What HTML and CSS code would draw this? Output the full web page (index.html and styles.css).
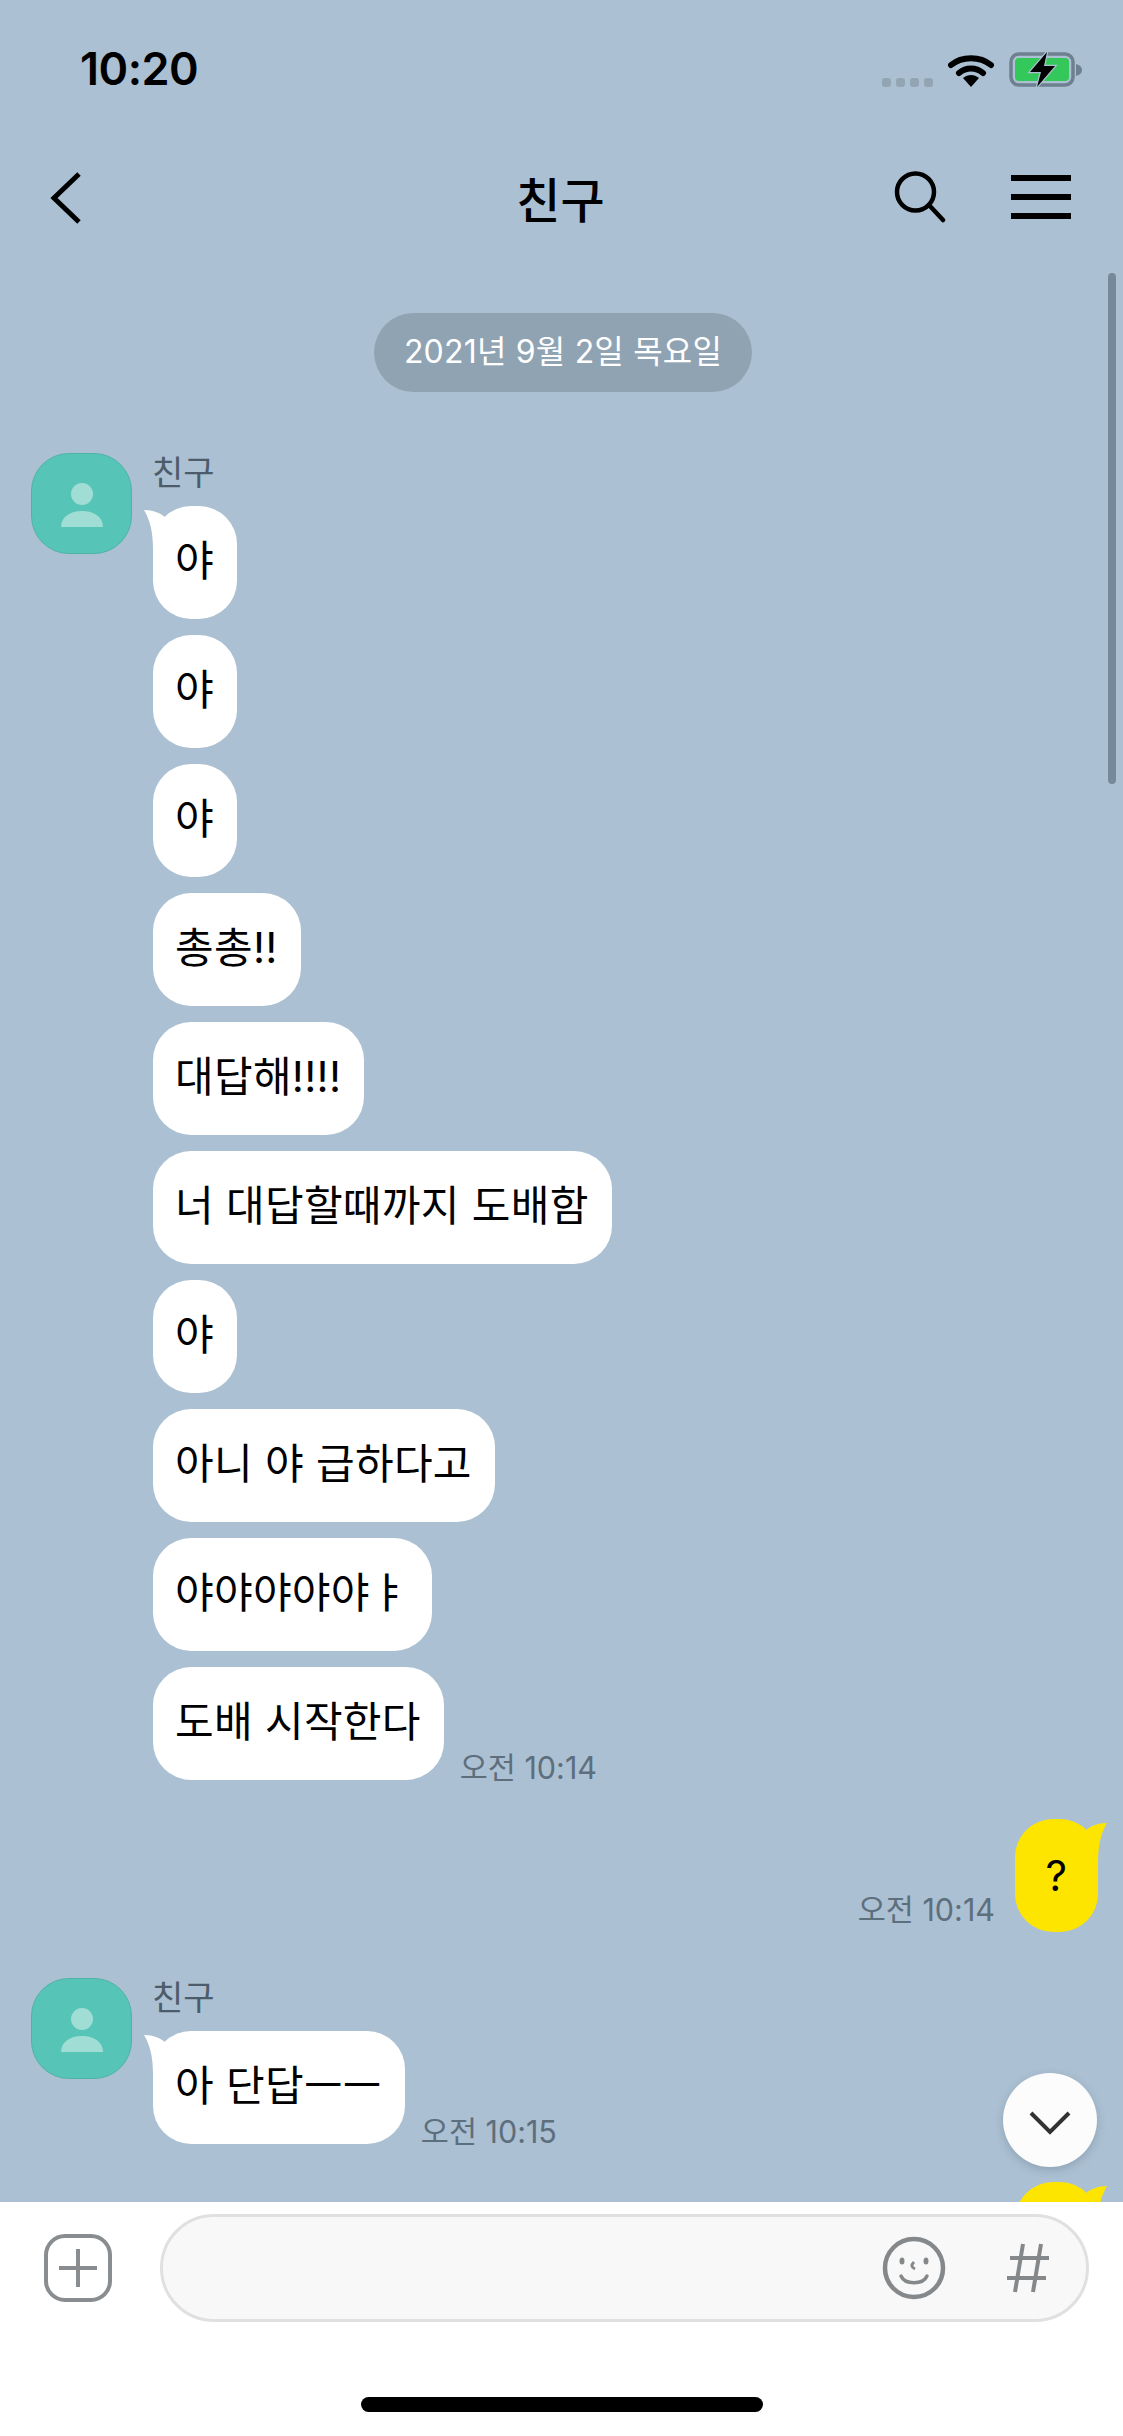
FILE: index.html
```html
<!DOCTYPE html>
<html lang="ko">

<head>
    <meta charset="UTF-8">
    <meta name="viewport" content="width=device-width, initial-scale=1.0">
    <title>친구</title>
    <link rel="stylesheet" href="styles.css">
</head>

<body>
    <div class="screen">
        <div class="status">
            <span class="clock">10:20</span>
            <div class="status-icons">
                <div class="signal"><i></i><i></i><i></i><i></i></div>
                <svg class="wifi" width="46" height="33" viewBox="0 0 46 33">
                    <path d="M3 11 C14 2 32 2 43 11" fill="none" stroke="#000" stroke-width="6" stroke-linecap="round"/>
                    <path d="M11 19 C18 13 28 13 35 19" fill="none" stroke="#000" stroke-width="6" stroke-linecap="round"/>
                    <path d="M15 24 C20 20 26 20 31 24 L23 33 Z" fill="#000"/>
                </svg>
                <svg class="battery" width="73" height="36" viewBox="0 0 73 36">
                    <rect x="2" y="2" width="62" height="31" rx="8" fill="none" stroke="#6f8090" stroke-width="3.5"/>
                    <rect x="6" y="6" width="54" height="23" rx="4" fill="#34c759"/>
                    <path d="M67 12 C71 13 73 15 73 18 C73 21 71 23 67 24 Z" fill="#6f8090"/>
                    <path d="M38 0 L21 20 L32 20 L28 35 L46 14 L35 14 Z" fill="#000" stroke="#abc0d2" stroke-width="2.500"/>
                    <path d="M38 0 L21 20 L32 20 L28 35 L46 14 L35 14 Z" fill="#000"/>
                </svg>
            </div>
        </div>

        <div class="nav">
            <svg class="back" width="32" height="54" viewBox="0 0 32 54">
                <path d="M29 3 L4 27 L29 51" fill="none" stroke="#000" stroke-width="5"/>
            </svg>
            <h1 class="title">친구</h1>
            <div class="nav-actions">
                <svg width="52" height="52" viewBox="0 0 52 52">
                    <circle cx="21.500" cy="21" r="18.500" fill="none" stroke="#000" stroke-width="4.500"/>
                    <path d="M35 34 L49 49" fill="none" stroke="#000" stroke-width="4.500" stroke-linecap="round"/>
                </svg>
                <div class="menu"><i></i><i></i><i></i></div>
            </div>
        </div>

        <div class="chat">
            <div class="date-row"><span class="date">2021년 9월 2일 목요일</span></div>

            <div class="group">
                <div class="avatar">
                    <svg width="44" height="44" viewBox="0 0 44 44">
                        <circle cx="22" cy="11" r="11" fill="#a0ddd5"/>
                        <path d="M1 44 C1 34 10 28 22 28 C34 28 43 34 43 44 Z" fill="#a0ddd5"/>
                    </svg>
                </div>
                <div class="stack">
                    <div class="name">친구</div>
                    <div class="line">
                        <div class="bubble">
                            <svg class="tail" width="24" height="40" viewBox="0 0 24 40">
                                <path d="M0 0 C9 0 17 3 22 8 L24 40 L9 40 C9 22 6 10 0 0 Z" fill="#fff"/>
                            </svg>
                            야
                        </div>
                    </div>
                    <div class="line"><div class="bubble">야</div></div>
                    <div class="line"><div class="bubble">야</div></div>
                    <div class="line"><div class="bubble">총총!!</div></div>
                    <div class="line"><div class="bubble">대답해!!!!</div></div>
                    <div class="line"><div class="bubble">너 대답할때까지 도배함</div></div>
                    <div class="line"><div class="bubble">야</div></div>
                    <div class="line"><div class="bubble">아니 야 급하다고</div></div>
                    <div class="line"><div class="bubble">야야야야야ㅑ</div></div>
                    <div class="line">
                        <div class="bubble">도배 시작한다</div>
                        <span class="time">오전 10:14</span>
                    </div>
                </div>
            </div>

            <div class="mine">
                <span class="time">오전 10:14</span>
                <div class="bubble yellow">
                    <svg class="tail-right" width="24" height="40" viewBox="0 0 24 40">
                        <path d="M24 0 C15 0 7 3 2 8 L0 40 L15 40 C15 22 18 10 24 0 Z" fill="#fee500"/>
                    </svg>
                    ?
                </div>
            </div>

            <div class="group second">
                <div class="avatar">
                    <svg width="44" height="44" viewBox="0 0 44 44">
                        <circle cx="22" cy="11" r="11" fill="#a0ddd5"/>
                        <path d="M1 44 C1 34 10 28 22 28 C34 28 43 34 43 44 Z" fill="#a0ddd5"/>
                    </svg>
                </div>
                <div class="stack">
                    <div class="name">친구</div>
                    <div class="line">
                        <div class="bubble">
                            <svg class="tail" width="24" height="40" viewBox="0 0 24 40">
                                <path d="M0 0 C9 0 17 3 22 8 L24 40 L9 40 C9 22 6 10 0 0 Z" fill="#fff"/>
                            </svg>
                            아 단답ㅡㅡ
                        </div>
                        <span class="time">오전 10:15</span>
                    </div>
                </div>
            </div>

            <div class="mine last">
                <div class="bubble yellow">
                    <svg class="tail-right" width="24" height="40" viewBox="0 0 24 40">
                        <path d="M24 0 C15 0 7 3 2 8 L0 40 L15 40 C15 22 18 10 24 0 Z" fill="#fee500"/>
                    </svg>
                </div>
            </div>

            <div class="scrollbar"></div>
            <div class="to-bottom">
                <svg width="44" height="26" viewBox="0 0 44 26">
                    <path d="M3 3 L22 22 L41 3" fill="none" stroke="#333" stroke-width="4"/>
                </svg>
            </div>
        </div>

        <div class="composer">
            <div class="composer-row">
                <svg class="plus" width="68" height="68" viewBox="0 0 68 68">
                    <rect x="2" y="2" width="64" height="64" rx="19" fill="none" stroke="#8a8d8f" stroke-width="4"/>
                    <path d="M15 34 H53 M34 15 V53" fill="none" stroke="#8a8d8f" stroke-width="4"/>
                </svg>
                <div class="field">
                    <svg width="64" height="64" viewBox="0 0 64 64">
                        <circle cx="32" cy="32" r="29" fill="none" stroke="#85888a" stroke-width="4.500"/>
                        <ellipse cx="20" cy="25" rx="2.500" ry="3.500" fill="#85888a"/>
                        <ellipse cx="44" cy="25" rx="2.500" ry="3.500" fill="#85888a"/>
                        <path d="M32 26 C29 29 29 31 33 33" fill="none" stroke="#85888a" stroke-width="3"/>
                        <path d="M19 40 C23 49 41 49 45 40" fill="none" stroke="#85888a" stroke-width="3.500" stroke-linecap="round"/>
                    </svg>
                    <svg class="hash" width="44" height="50" viewBox="0 0 44 50">
                        <path d="M17 1 L9 49 M35 1 L27 49 M4 15 H43 M1 35 H40" fill="none" stroke="#85888a" stroke-width="4"/>
                    </svg>
                </div>
            </div>
            <div class="home-bar"></div>
        </div>
    </div>
</body>

</html>
```

FILE: styles.css
```css
* {
    box-sizing: border-box;
}

body {
    margin: 0;
    font-family: Inter, "Noto Sans CJK KR", sans-serif;
    background: #abc0d2;
}

.screen {
    width: 1123px;
    height: 2436px;
    display: flex;
    flex-direction: column;
    overflow: hidden;
    background: #abc0d2;
}

.status {
    height: 132px;
    flex: none;
    padding: 42px 41px 0 80px;
    display: flex;
    justify-content: space-between;
    align-items: flex-start;
}

.clock {
    font-family: Inter, sans-serif;
    font-size: 45px;
    font-weight: 600;
    letter-spacing: -0.5px;
    line-height: 54px;
    color: #000;
}

.status-icons {
    display: flex;
    align-items: flex-end;
    padding-top: 10px;
}

.signal {
    display: flex;
    gap: 5px;
    margin-right: 15px;
    margin-bottom: 1px;
}

.signal i {
    width: 9px;
    height: 9px;
    border-radius: 3px;
    background: #93a5b3;
}

.wifi {
    margin-right: 15px;
    margin-bottom: 1px;
}

.nav {
    height: 130px;
    flex: none;
    padding: 0 52px 0 50px;
    display: grid;
    grid-template-columns: 1fr auto 1fr;
    align-items: center;
}

.back {
    margin-top: 2px;
}

.title {
    margin: 0;
    font-family: "Noto Sans CJK KR", sans-serif;
    font-size: 48px;
    font-weight: 500;
    line-height: 60px;
    color: #000;
}

.nav-actions {
    display: flex;
    justify-content: flex-end;
    align-items: center;
    gap: 65px;
}

.menu {
    display: flex;
    flex-direction: column;
    gap: 13px;
    width: 60px;
}

.menu i {
    height: 6px;
    background: #000;
}

.chat {
    flex: 1;
    min-height: 0;
    position: relative;
    overflow: hidden;
    padding-top: 51px;
}

.date-row {
    display: flex;
    justify-content: center;
    margin-bottom: 61px;
}

.date {
    height: 79px;
    margin-left: 3px;
    padding: 0 30px;
    border-radius: 40px;
    background: #90a3b2;
    color: #fff;
    font-size: 32px;
    letter-spacing: 0.2px;
    line-height: 77px;
}

.group {
    display: flex;
    gap: 21px;
    padding-left: 31px;
}

.avatar {
    width: 101px;
    height: 101px;
    flex: none;
    padding-top: 29px;
    display: flex;
    justify-content: center;
    align-items: flex-start;
    border-radius: 38px;
    background: #56c4b6;
    border: 1px solid #4fb3a8;
}

.name {
    height: 53px;
    margin-left: -1px;
    font-size: 34px;
    line-height: 40px;
    color: #4d5c6a;
}

.stack {
    display: flex;
    flex-direction: column;
    gap: 16px;
}

.stack .name {
    margin-bottom: -16px;
}

.line {
    display: flex;
    align-items: flex-end;
    gap: 16px;
}

.bubble {
    position: relative;
    height: 113px;
    padding: 0 23px 0 22px;
    border-radius: 38px;
    background: #fff;
    color: #000;
    font-size: 42px;
    letter-spacing: 0.3px;
    line-height: 110px;
    white-space: nowrap;
}

.tail {
    position: absolute;
    left: -9px;
    top: 4px;
}

.tail-right {
    position: absolute;
    right: -9px;
    top: 4px;
}

.yellow {
    background: #fee500;
    width: 83px;
    padding: 0;
    text-align: center;
    font-size: 42px;
    line-height: 113px;
}

.time {
    font-size: 30.500px;
    line-height: 24px;
    color: #5d6e7c;
    white-space: nowrap;
}

.mine {
    display: flex;
    justify-content: flex-end;
    align-items: flex-end;
    gap: 20px;
    padding-right: 25px;
    margin-top: 39px;
}

.mine .time {
    margin-bottom: 10px;
}

.second {
    margin-top: 46px;
}

.last {
    margin-top: 38px;
}

.scrollbar {
    position: absolute;
    right: 7px;
    top: 11px;
    width: 8px;
    height: 511px;
    border-radius: 4px;
    background: #76899a;
}

.to-bottom {
    position: absolute;
    left: 1003px;
    top: 1811px;
    width: 94px;
    height: 94px;
    padding-top: 6px;
    display: flex;
    justify-content: center;
    align-items: center;
    border-radius: 50%;
    background: #fcfcfc;
    box-shadow: 0 3px 8px rgba(60, 80, 100, 0.25);
}

.composer {
    height: 234px;
    flex: none;
    background: #fff;
    padding-top: 12px;
}

.composer-row {
    display: flex;
    align-items: center;
    padding: 0 34px 0 44px;
}

.plus {
    flex: none;
    margin-right: 48px;
}

.field {
    flex: 1;
    height: 108px;
    padding-right: 36px;
    display: flex;
    justify-content: flex-end;
    align-items: center;
    gap: 60px;
    border-radius: 54px;
    background: #f8f8f8;
    border: 3px solid #e0e0e0;
}

.home-bar {
    width: 402px;
    height: 15px;
    margin: 75px auto 0;
    border-radius: 8px;
    background: #000;
}
```
